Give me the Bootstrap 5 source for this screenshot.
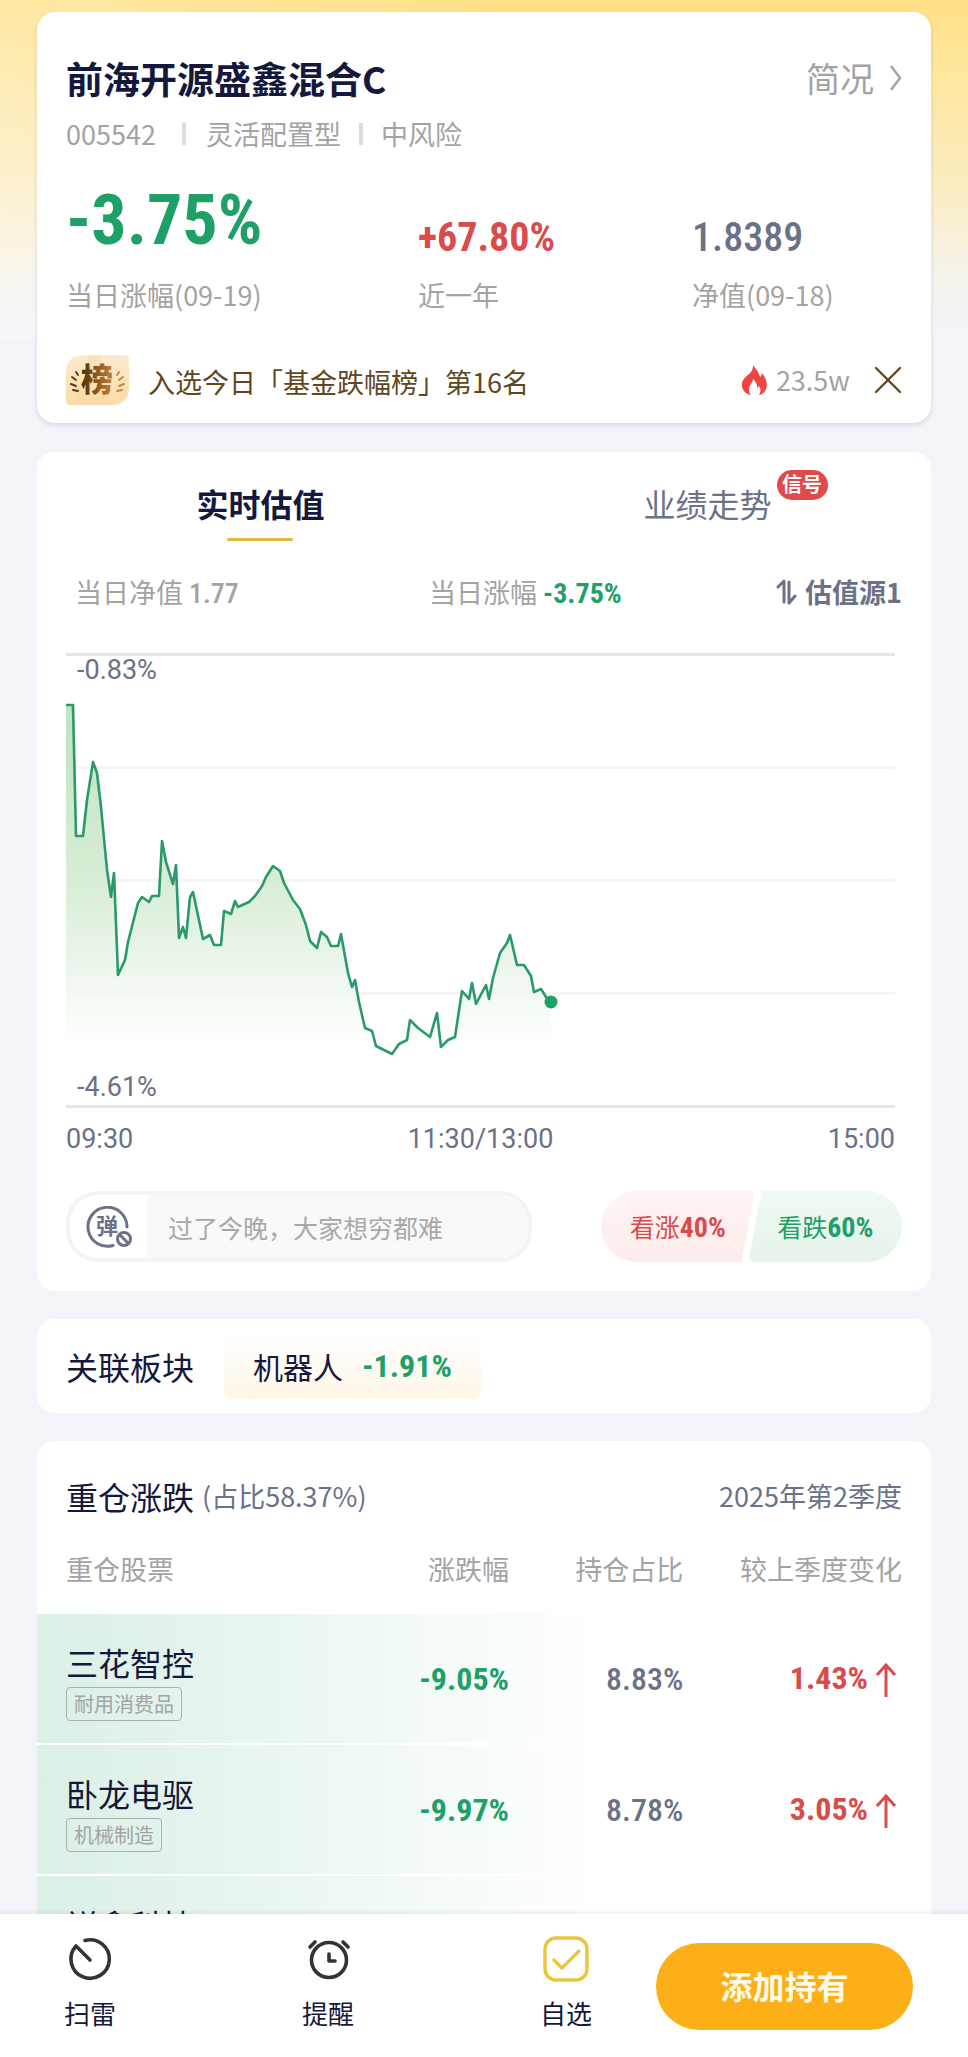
<!DOCTYPE html>
<html lang="zh-CN">
<head>
<meta charset="utf-8">
<meta name="viewport" content="width=device-width, initial-scale=1">
<title>前海开源盛鑫混合C</title>
<link href="https://cdn.jsdelivr.net/npm/bootstrap@5.3.0/dist/css/bootstrap.min.css" rel="stylesheet">
<style>
:root{--ink:#14183c;--slate:#6b7186;--mute:#a3a3a3;--up:#d94c4c;--down:#20a069;--brown:#604720}
body{font-family:"Noto Sans CJK SC",sans-serif;font-size:27px;line-height:32px;color:var(--ink);background:#f3f4fa}
button,input{font-family:inherit}
a{color:inherit;text-decoration:none}
.page-scroll{min-height:0;overflow-y:auto;scrollbar-width:none;padding:12px 37px 0;
  background:linear-gradient(100deg,rgba(255,255,255,.25),rgba(255,255,255,0) 50%) 0 0/100% 340px no-repeat,
  linear-gradient(180deg,#ffe086 0,#fee69c 70px,#fbecc0 180px,#f5f2e8 270px,#f3f4fa 340px) 0 0/100% 340px no-repeat,#f3f4fa}
.page-scroll::-webkit-scrollbar{display:none}
.panel{background:#fff;border-radius:18px;padding:0 29px;margin-bottom:28px}
.num{font-family:"Roboto Condensed","Roboto",sans-serif;font-weight:700}
.num-m{font-weight:500}
.plain{background:none;border:0;padding:0;color:inherit}
.t-mute{color:var(--mute)}.t-slate{color:var(--slate)}.t-up{color:var(--up)}.t-down{color:var(--down)}

.fund{padding-top:43px;padding-bottom:18px;margin-bottom:29px;box-shadow:0 2px 4px rgba(40,40,70,.14)}
.fund h1{font-size:37px;line-height:46px;font-weight:700}
.brief{font-size:34px;line-height:46px}
.meta{margin-top:17px;gap:18px}
.bar-sep{width:4px;height:22px;background:#dcdcdc}
.code-sep{margin:0 2px 0 8px}
.stats{display:grid;grid-template-columns:352fr 274fr 210fr;margin-top:31px}
.stat-value{height:76px;font-size:40px;line-height:38px;margin-bottom:22px}
.stat-main{font-size:70px;line-height:78px}
.rank{margin-top:44px;height:50px;color:var(--brown)}
.rank-text{margin-left:19px;padding-top:4px}

.trend{padding-bottom:29px}
.tabs-row{padding-top:31px;margin:0 -29px}
.tab-btn{font-size:32px;line-height:40px;height:58px;position:relative;vertical-align:top}
.tab-btn.on{font-weight:700;color:var(--ink)}
.tab-btn.on::after{content:"";position:absolute;left:50%;bottom:0;width:66px;height:3px;margin-left:-33px;background:#e2b93f;border-radius:2px}
.signal{position:absolute;left:100%;top:-13px;margin-left:5px;width:51px;height:30px;line-height:28px;border-radius:15px;background:#e04a4a;color:#fff;font-size:20px;font-weight:700}
.quote{margin-top:35px;height:32px;padding-left:9px;display:grid;grid-template-columns:354fr 347fr auto}
.quote .num{font-size:28px;line-height:28px}
.chart{margin:45px 7px 0 0;position:relative}
.chart svg{display:block;width:100%;height:auto}
.axis{font-family:Roboto,sans-serif;font-size:27px;line-height:32px;color:var(--slate)}
.axis-max,.axis-min{position:absolute;left:11px}
.axis-max{top:1px}.axis-min{bottom:5px}
.times{margin:15px 7px 0 0;justify-content:space-between}
.talk{margin-top:36px;gap:69px}
.danmu{flex:458 1 0;min-width:0;height:71px;border:4px solid #f4f4f4;border-radius:32px;background:#f9f9f9;overflow:hidden}
.danmu button{width:77px;background:#fff}
.danmu input{flex:1;min-width:0;border:0;background:none;padding:0 21px;font-size:25px;outline:0}
.danmu input::placeholder{color:#a8a8a8;opacity:1}
.vote{flex:301 1 0}
.vote button{height:71px;font-size:25px;flex:1 1 0;white-space:nowrap}
.vote .num{font-size:28px}
.vote-up{background:linear-gradient(#fff4f4,#fdebeb);border-radius:36px 6px 6px 36px;clip-path:polygon(0 0,100% 0,calc(100% - 13px) 100%,0 100%);margin-right:-3px}
.vote-down{background:linear-gradient(#f1f9f3,#e5f3e8);border-radius:6px 36px 36px 6px;clip-path:polygon(13px 0,100% 0,100% 100%,0 100%);margin-left:-3px}

.sector{height:94px;gap:30px;font-size:32px}
.sector-chip{height:66px;padding:0 29px;gap:19px;border-radius:8px;background:linear-gradient(#fff,#fef6e6);font-size:30px}
.sector-chip .num{font-size:32px}

.holdings{padding:38px 0 0;margin-bottom:0}
.holdings-head{padding:0 29px;line-height:34px}
.holdings h2{font-size:32px;line-height:34px;font-weight:400}
.stocks{width:100%;table-layout:fixed;margin-top:40px}
.stocks th{font-weight:400;color:var(--mute);line-height:32px;padding:0 0 29px;text-align:right}
.stocks td{text-align:right;padding:29px 0 22px;border-bottom:2px solid #fff;vertical-align:middle}
.stocks td.num{padding:29px 0 28px;font-size:32px;line-height:34px}
.stocks th:first-child,.stocks td:first-child{text-align:left;padding-left:29px}
.stocks th:last-child,.stocks td:last-child{padding-right:29px}
.stocks tbody tr{background:linear-gradient(90deg,#dbf0e7 0,#eaf6f1 28%,#fafdfc 55%,#fff 64%)}
.stock-name{font-size:32px;line-height:38px;margin-bottom:6px}
.sector-tag{display:inline-block;border:1px solid #a9b0ac;border-radius:4px;font-size:20px;line-height:32px;height:34px;padding:0 7px;color:var(--mute);vertical-align:top}
.stocks svg{margin-left:7px;margin-right:5px}

.dock{background:#fff;padding:21px 55px 27px 64px;gap:64px;box-shadow:0 -2px 4px rgba(40,40,70,.08)}
.dock-link{font-size:26px;line-height:34px}
.dock-link svg{display:block;margin-bottom:13px}
.btn-hold,.btn-hold:hover{width:257px;height:87px;padding:0 0 4px;border:0;border-radius:44px;background:#fdaf17;color:#fffbe6;font-size:32px;font-weight:700}
</style>
</head>
<body>
<div class="vh-100 d-flex flex-column">
<main class="page-scroll flex-grow-1">

  <section class="panel fund">
    <div class="d-flex justify-content-between">
      <h1 class="m-0">前海开源盛鑫混合C</h1>
      <a href="#" class="brief t-mute d-flex align-items-center">简况
        <svg class="ms-3" width="12" height="26" viewBox="0 0 12 26" fill="none" stroke="#a3a3a3" stroke-width="2.4"><path d="M1 1l9 12-9 12"/></svg></a>
    </div>
    <div class="meta d-flex align-items-center t-mute">
      <span>005542</span><span class="bar-sep code-sep"></span><span>灵活配置型</span><span class="bar-sep"></span><span>中风险</span>
    </div>
    <div class="stats">
      <div><div class="stat-value stat-main num t-down">-3.75%</div><div class="t-mute">当日涨幅(09-19)</div></div>
      <div><div class="stat-value num t-up d-flex align-items-end">+67.80%</div><div class="t-mute">近一年</div></div>
      <div><div class="stat-value num num-m t-slate d-flex align-items-end">1.8389</div><div class="t-mute">净值(09-18)</div></div>
    </div>
    <div class="rank d-flex align-items-center">
      <svg width="63" height="50" viewBox="0 0 63 50">
        <defs>
          <linearGradient id="plate" x1="0" y1="0" x2="0" y2="1"><stop offset="0" stop-color="#fdebcf"/><stop offset="1" stop-color="#fbdba8"/></linearGradient>
          <linearGradient id="gold" x1="0" x2="1"><stop offset="0" stop-color="#4a2f12"/><stop offset=".5" stop-color="#8b5a20"/><stop offset="1" stop-color="#c08238"/></linearGradient>
        </defs>
        <path d="M18 0H58Q63 0 63 5V32Q63 50 45 50H5Q0 50 0 45V18Q0 0 18 0Z" fill="url(#plate)"/>
        <path d="M22 0H36L39 50H14L8 34Q24 20 22 0Z" fill="#f9d9a4" opacity=".5"/>
        <g stroke="#5a3c18" stroke-width="2" stroke-linecap="round"><path d="M10 17l2 3M6 22l4 3M5 29l5 2M7 35l5 1"/></g>
        <g stroke="#c08a48" stroke-width="2" stroke-linecap="round"><path d="M53 17l-2 3M57 22l-4 3M58 29l-5 2M56 35l-5 1"/></g>
        <text x="31" y="36" text-anchor="middle" font-size="32" font-weight="900" fill="url(#gold)">榜</text>
      </svg>
      <span class="rank-text">入选今日「基金跌幅榜」第16名</span>
      <span class="ms-auto d-flex align-items-center t-mute">
        <svg class="me-2" width="27" height="30" viewBox="0 0 27 30"><path d="M12 0C14 3 18 7 19 12C20 11 21 10 21 8C25 13 27 19 25 24C24 27 22 29 18 30C20 27 20 24 18 21C17 22 17 23 16 23C17 19 14 16 12 14C12 18 8 20 8 24C8 27 9 29 10 30C5 29 2 26 1 22C0 16 4 12 7 10C11 7 12 4 12 0Z" fill="#f04444"/></svg>
        <span>23.5w</span></span>
      <button class="plain d-flex ms-4" aria-label="关闭">
        <svg width="28" height="28" viewBox="0 0 28 28" stroke="#604720" stroke-width="2.4" stroke-linecap="round"><path d="M2 2l24 24M26 2L2 26"/></svg></button>
    </div>
  </section>

  <section class="panel trend">
    <div class="tabs-row row g-0">
      <div class="col text-center"><button class="plain tab-btn on d-inline-flex">实时估值</button></div>
      <div class="col text-center"><button class="plain tab-btn t-slate d-inline-flex">业绩走势<span class="signal">信号</span></button></div>
    </div>
    <div class="quote">
      <span class="t-mute">当日净值 <span class="num num-m">1.77</span></span>
      <span class="t-mute">当日涨幅 <span class="num t-down">-3.75%</span></span>
      <button class="plain t-slate fw-bold d-flex align-items-center">
        <svg class="me-2" width="21" height="26" viewBox="0 0 21 26" fill="none" stroke="#6b7186" stroke-width="3" stroke-linejoin="round" stroke-linecap="round"><path d="M2 8L8 2V23M13 3V24L19 17"/></svg>估值源1</button>
    </div>
    <div class="chart">
      <svg viewBox="0 0 829 455" role="img" aria-label="估值走势">
        <defs><linearGradient id="area" gradientUnits="userSpaceOnUse" x1="0" y1="52" x2="0" y2="395"><stop offset="0" stop-color="#b9e0b9"/><stop offset=".5" stop-color="#d3ead1"/><stop offset="1" stop-color="#fff"/></linearGradient></defs>
        <g stroke-width="3"><path d="M0 1.5H829M0 453.5H829" stroke="#e4e7ea"/><path d="M0 114.5H829M0 227.5H829M0 340.5H829" stroke="#f4f5f6"/></g>
        <path id="fill" fill="url(#area)" opacity=".9"/>
        <path id="line" fill="none" stroke="#2a9a6a" stroke-width="2.6" stroke-linejoin="round"/>
        <circle cx="485" cy="349" r="6.5" fill="#1fa067"/>
      </svg>
      <span class="axis axis-max">-0.83%</span><span class="axis axis-min">-4.61%</span>
    </div>
    <div class="times axis d-flex"><span>09:30</span><span>11:30/13:00</span><span>15:00</span></div>
    <div class="talk d-flex">
      <div class="danmu d-flex">
        <button class="plain d-flex align-items-center justify-content-center" aria-label="弹幕开关">
          <svg width="46" height="42" viewBox="0 0 46 42" fill="none" stroke="#6b7186" stroke-width="3" stroke-linecap="round">
            <path d="M41 21A19.500 19.500 0 1 0 27 39.500"/><circle cx="38" cy="33" r="6.500"/><path d="M34 29l8 8"/>
            <text x="21" y="28" text-anchor="middle" font-size="22" font-weight="700" fill="#6b7186" stroke="none">弹</text></svg></button>
        <input type="text" aria-label="发送弹幕" placeholder="过了今晚，大家想穷都难">
      </div>
      <div class="vote d-flex">
        <button class="plain vote-up t-up">看涨<span class="num">40%</span></button>
        <button class="plain vote-down t-down">看跌<span class="num">60%</span></button>
      </div>
    </div>
  </section>

  <section class="panel sector d-flex align-items-center">
    <span>关联板块</span>
    <a href="#" class="sector-chip d-flex align-items-center"><span>机器人</span><span class="num t-down">-1.91%</span></a>
  </section>

  <section class="panel holdings">
    <div class="holdings-head d-flex justify-content-between">
      <div class="d-flex"><h2 class="m-0">重仓涨跌</h2><span class="t-slate ms-2">(占比58.37%)</span></div>
      <span class="t-slate">2025年第2季度</span>
    </div>
    <table class="stocks">
      <colgroup><col style="width:30%"><col style="width:22.8%"><col style="width:19.5%"><col></colgroup>
      <thead><tr><th scope="col">重仓股票</th><th scope="col">涨跌幅</th><th scope="col">持仓占比</th><th scope="col">较上季度变化</th></tr></thead>
      <tbody>
        <tr><td><div class="stock-name">三花智控</div><span class="sector-tag">耐用消费品</span></td><td class="num t-down">-9.05%</td><td class="num num-m t-slate">8.83%</td>
          <td class="num t-up">1.43%<svg width="22" height="34" viewBox="0 0 22 34" fill="none" stroke="#d94c4c" stroke-width="3"><path d="M11 34V2M2 12l9-10 9 10"/></svg></td></tr>
        <tr><td><div class="stock-name">卧龙电驱</div><span class="sector-tag">机械制造</span></td><td class="num t-down">-9.97%</td><td class="num num-m t-slate">8.78%</td>
          <td class="num t-up">3.05%<svg width="22" height="34" viewBox="0 0 22 34" fill="none" stroke="#d94c4c" stroke-width="3"><path d="M11 34V2M2 12l9-10 9 10"/></svg></td></tr>
        <tr><td><div class="stock-name">祥鑫科技</div></td><td></td><td></td><td></td></tr>
      </tbody>
    </table>
  </section>
</main>

<footer class="dock d-flex align-items-end position-relative">
  <nav class="d-flex justify-content-between flex-grow-1">
    <a href="#" class="dock-link d-flex flex-column align-items-center">
      <svg width="48" height="48" viewBox="0 0 48 48" fill="none" stroke="#333" stroke-width="3.600" stroke-linecap="round" stroke-linejoin="round"><path d="M19 5.500A19.200 19.200 0 1 1 10 11L24 25"/></svg>扫雷</a>
    <a href="#" class="dock-link d-flex flex-column align-items-center">
      <svg width="48" height="48" viewBox="0 0 48 48" fill="none" stroke="#333" stroke-width="3.600" stroke-linecap="round" stroke-linejoin="round"><circle cx="25" cy="25" r="17.500"/><path d="M25 19V26H31M6 12l5-5M44 12l-5-5"/></svg>提醒</a>
    <a href="#" class="dock-link d-flex flex-column align-items-center">
      <svg width="48" height="48" viewBox="0 0 48 48" fill="none" stroke="#edc53c" stroke-width="3.400" stroke-linecap="round" stroke-linejoin="round"><rect x="3" y="3" width="42" height="42" rx="11"/><path d="M12 25l8 8 17-17"/></svg>自选</a>
  </nav>
  <button class="btn btn-hold flex-shrink-0">添加持有</button>
</footer>
</div>
<script src="https://cdn.jsdelivr.net/npm/bootstrap@5.3.0/dist/js/bootstrap.bundle.min.js"></script>
<script>
const pts="0,52 7,52 10,183 17,183 21,147 27,109 31,120 35,154 41,217 45,244 48,220 52,322 59,307 62,289 72,250 76,244 83,249 86,243 93,243 96,188 100,209 107,231 110,212 113,285 117,274 120,285 124,244 127,239 137,286 144,282 148,292 155,292 158,258 165,261 169,248 172,254 183,249 189,243 196,233 200,224 207,213 214,218 218,230 227,247 234,256 240,272 244,288 251,295 255,279 261,284 265,293 272,293 275,281 282,320 286,334 289,327 293,349 299,375 306,378 310,393 326,401 333,391 341,387 344,367 352,375 364,384 371,360 375,394 382,387 389,384 396,338 403,346 406,330 410,351 420,332 423,346 427,325 434,300 441,290 444,282 451,312 458,312 465,323 468,339 475,336 480,344 485,349";
document.getElementById("line").setAttribute("d","M"+pts.replaceAll(" ","L"));
document.getElementById("fill").setAttribute("d","M"+pts.replaceAll(" ","L")+"V395H0Z");
</script>
</body>
</html>
